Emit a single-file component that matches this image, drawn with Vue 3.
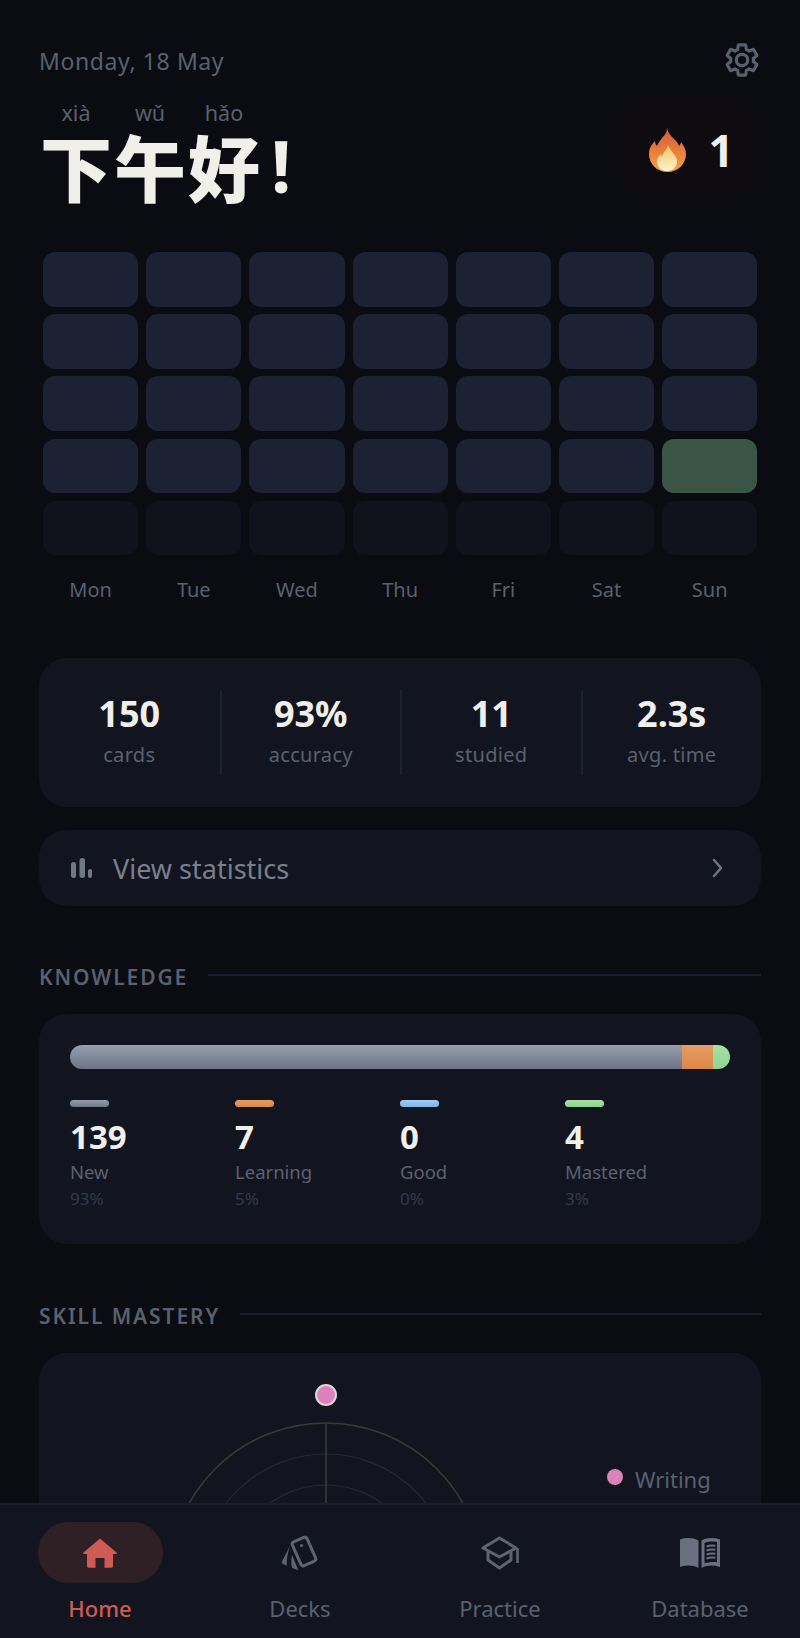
<template>
  <div class="page">
    <div class="top-row">
      <div class="date">Monday, 18 May</div>
      <svg class="gear" viewBox="0 0 24 24" width="38" height="38" fill="none" stroke="#5b606f" stroke-width="2">
        <path d="M19.14 12.94c.04-.3.06-.61.06-.94 0-.32-.02-.64-.07-.94l2.03-1.58c.18-.14.23-.41.12-.61l-1.92-3.32c-.12-.22-.37-.29-.59-.22l-2.39.96c-.5-.38-1.03-.7-1.62-.94l-.36-2.54c-.04-.24-.24-.41-.48-.41h-3.84c-.24 0-.43.17-.47.41l-.36 2.54c-.59.24-1.13.57-1.62.94l-2.39-.96c-.22-.08-.47 0-.59.22L2.74 8.87c-.12.21-.08.47.12.61l2.03 1.58c-.05.3-.09.63-.09.94s.02.64.07.94l-2.03 1.58c-.18.14-.23.41-.12.61l1.92 3.32c.12.22.37.29.59.22l2.39-.96c.5.38 1.03.7 1.62.94l.36 2.54c.05.24.24.41.48.41h3.84c.24 0 .44-.17.47-.41l.36-2.54c.59-.24 1.13-.56 1.62-.94l2.39.96c.22.08.47 0 .59-.22l1.92-3.32c.12-.22.07-.47-.12-.61l-2.01-1.58z"/>
        <circle cx="12" cy="12" r="3.6"/>
      </svg>
    </div>

    <div class="greeting-row">
      <div class="greeting">
        <div v-for="c in greeting" :key="c.han" class="ruby">
          <span class="py">{{ c.py }}</span>
          <span class="han">{{ c.han }}</span>
        </div>
        <span class="han bang">!</span>
      </div>
      <div class="streak">
        <svg width="37" height="44" viewBox="0 0 37 44">
          <defs>
            <linearGradient id="flame" x1="0" y1="0" x2="0" y2="1">
              <stop offset="0" stop-color="#d4593a"/>
              <stop offset="0.55" stop-color="#ea803a"/>
              <stop offset="1" stop-color="#f3a24a"/>
            </linearGradient>
            <linearGradient id="flame-in" x1="0" y1="0" x2="0" y2="1">
              <stop offset="0" stop-color="#f6c060"/>
              <stop offset="1" stop-color="#fff6d0"/>
            </linearGradient>
          </defs>
          <path fill="url(#flame)" d="M18 0c1 5 4 8 8 12 2 2 3 3 4 6 1-1 2-3 2-4 3 4 5 8 5 12 0 10-8 18-18.500 18S0 36 0 26c0-6 3-10 6-13 0 2 1 4 2 5 1-3 3-5 5-8 3-3 5-6 5-10z"/>
          <path fill="url(#flame-in)" d="M19 17c1 3 3 5 5 8 2 2 4 5 4 8 0 6-4 10-10 10s-10-4-10-10c0-3 2-5 4-7 0 1 .5 2 1 3 1-5 5-7 6-12z"/>
        </svg>
        <span class="streak-num">1</span>
      </div>
    </div>

    <div class="heat">
      <div v-for="(c, i) in cells" :key="i" class="cell" :class="c"></div>
    </div>
    <div class="days">
      <span v-for="d in days" :key="d">{{ d }}</span>
    </div>

    <div class="card stats">
      <div v-for="s in stats" :key="s.label" class="stat">
        <div class="stat-num">{{ s.value }}</div>
        <div class="stat-label">{{ s.label }}</div>
      </div>
    </div>

    <div class="card stats-link">
      <svg width="22" height="21" viewBox="0 0 22 21" fill="#727786">
        <rect x="1" y="4" width="5" height="16" rx="2.500"/>
        <rect x="9.500" y="0" width="5.500" height="20" rx="2.700"/>
        <rect x="18" y="11" width="4" height="9" rx="2"/>
      </svg>
      <span class="link-text">View statistics</span>
      <svg class="chevron" width="12" height="22" viewBox="0 0 12 22" fill="none" stroke="#727786" stroke-width="2.400" stroke-linecap="round" stroke-linejoin="round">
        <path d="M2 3l7 8-7 8"/>
      </svg>
    </div>

    <div class="section-head first">
      <span>KNOWLEDGE</span>
      <i></i>
    </div>
    <div class="card knowledge">
      <div class="bar">
        <div class="seg seg-new" :style="{ width: '612px' }"></div>
        <div class="seg seg-learning" :style="{ width: '31px' }"></div>
        <div class="seg seg-mastered"></div>
      </div>
      <div class="legend">
        <div v-for="k in knowledge" :key="k.label" class="legend-item">
          <div class="dash" :class="k.cls"></div>
          <div class="k-num">{{ k.value }}</div>
          <div class="k-label">{{ k.label }}</div>
          <div class="k-pct">{{ k.pct }}</div>
        </div>
      </div>
    </div>

    <div class="section-head second">
      <span>SKILL MASTERY</span>
      <i></i>
    </div>
    <div class="card skill">
      <svg class="radar" width="722" height="230" viewBox="0 0 722 230" fill="none">
        <circle cx="287" cy="227" r="157" stroke="#363c33" stroke-width="1.500"/>
        <circle cx="287" cy="227" r="126" stroke="#242934" stroke-width="1.200"/>
        <circle cx="287" cy="227" r="95" stroke="#242934" stroke-width="1.200"/>
        <path d="M287 70v160" stroke="#363c33" stroke-width="1.500"/>
        <circle cx="287" cy="42" r="10" fill="#dc82b8" stroke="#dcd6da" stroke-width="2"/>
      </svg>
      <div class="skill-legend">
        <i></i>
        <span>Writing</span>
      </div>
    </div>

    <nav class="nav">
      <div class="nav-item active">
        <div class="nav-icon">
          <svg width="34" height="30" viewBox="0 0 34 30" fill="#cf5b55">
            <path d="M17 0.500 33.500 14.500c.5.500.2 1.500-.6 1.500H30v12c0 1-.7 1.700-1.700 1.700H21.500V20h-9v9.700H5.700C4.700 29.700 4 29 4 28V16H1.100C.3 16 0 15 .5 14.500z"/>
          </svg>
        </div>
        <span>Home</span>
      </div>
      <div class="nav-item">
        <div class="nav-icon">
          <svg width="38" height="36" viewBox="0 0 38 36" fill="none">
            <rect x="15" y="3.500" width="16" height="26" rx="2.500" transform="rotate(-24 23 16.500)" stroke="#5e6371" stroke-width="3"/>
            <circle cx="20.500" cy="10.500" r="1.600" fill="#5e6371"/>
            <path d="M9 11 1.200 26c-.5 1.500 0 2.600 1.200 3.200l3.400 1.300c-.5-6 1-13 3.200-19.500z" fill="#5e6371"/>
            <path d="M11 20c-1 5-1 10 .4 13l6 2.300z" fill="#5e6371"/>
          </svg>
        </div>
        <span>Decks</span>
      </div>
      <div class="nav-item">
        <div class="nav-icon">
          <svg width="40" height="34" viewBox="0 0 40 34" fill="none" stroke="#5e6371" stroke-width="3" stroke-linejoin="round">
            <path d="M19.500 2 36 12 19.500 21 3 12z"/>
            <path d="M8 15.500V24l11.500 8L31 24v-8.500"/>
            <path d="M37.500 12v15" stroke-width="2.600"/>
          </svg>
        </div>
        <span>Practice</span>
      </div>
      <div class="nav-item">
        <div class="nav-icon">
          <svg width="40" height="32" viewBox="0 0 40 32">
            <path fill="#6b7080" d="M0 2.500c6-2 12-2 18.500 1V31c-6-3-12-3-18.500-1z"/>
            <path fill="#6b7080" d="M21.500 3.500c6-3 12-3 18.500-1V30c-6.500-2-12.500-2-18.500 1zM24.500 6v20.500c4.500-1.600 8.500-1.900 12.500-1.200V5c-4-.8-8.500-.6-12.500 1z"/>
            <path fill="none" stroke="#6b7080" stroke-width="1.900" d="M26.500 9.500c3-1 6-1.200 9-.7M26.500 13.500c3-1 6-1.200 9-.7M26.500 17.500c3-1 6-1.200 9-.7M26.500 21.500c3-1 6-1.200 9-.7"/>
          </svg>
        </div>
        <span>Database</span>
      </div>
    </nav>
  </div>
</template>

<script setup>
const greeting = [
  { han: '下', py: 'xià' },
  { han: '午', py: 'wǔ' },
  { han: '好', py: 'hǎo' }
]

const days = ['Mon', 'Tue', 'Wed', 'Thu', 'Fri', 'Sat', 'Sun']

const cells = Array.from({ length: 35 }, (_, i) => {
  if (i === 27) return 'done'
  if (i >= 28) return 'future'
  return 'past'
})

const stats = [
  { value: '150', label: 'cards' },
  { value: '93%', label: 'accuracy' },
  { value: '11', label: 'studied' },
  { value: '2.3s', label: 'avg. time' }
]

const knowledge = [
  { value: 139, label: 'New', pct: '93%', cls: 'seg-new' },
  { value: 7, label: 'Learning', pct: '5%', cls: 'seg-learning' },
  { value: 0, label: 'Good', pct: '0%', cls: 'seg-good' },
  { value: 4, label: 'Mastered', pct: '3%', cls: 'seg-mastered' }
]
</script>

<style>
html, body {
  margin: 0;
  background: #0a0c11;
}
</style>

<style scoped>
.page {
  position: relative;
  height: 1638px;
  overflow: hidden;
  box-sizing: border-box;
  padding: 43px 39px 0;
  background: #0a0c11;
  font-family: "Noto Sans", "Noto Sans CJK SC", sans-serif;
  color: #f0efe9;
}

.top-row {
  display: flex;
  justify-content: space-between;
  align-items: center;
  height: 34px;
}

.date {
  font-size: 23px;
  line-height: 34px;
  margin-top: 2px;
  color: #5b606f;
  letter-spacing: 0.6px;
}

.greeting-row {
  display: flex;
  justify-content: space-between;
  margin-top: 23px;
  height: 97px;
}

.greeting {
  display: flex;
  align-items: flex-start;
  height: 108px;
}

.ruby {
  display: flex;
  flex-direction: column;
  align-items: center;
  width: 74px;
}

.py {
  font-size: 21.5px;
  line-height: 26px;
  color: #5b606f;
}

.han {
  margin-top: -2px;
  font-size: 72px;
  line-height: 82px;
  font-weight: 900;
  font-family: "Noto Sans CJK SC", "Noto Sans", sans-serif;
}

.bang {
  margin: 24px 0 0 10px;
  font-family: "Noto Sans", sans-serif;
  font-weight: 700;
}

.streak {
  display: flex;
  align-items: center;
  justify-content: center;
  gap: 22px;
  box-sizing: border-box;
  width: 145px;
  height: 97px;
  padding: 2px 0 0 6px;
  border-radius: 28px;
  background: #0e0b11;
}

.streak-num {
  font-size: 44px;
  font-weight: 700;
  line-height: 50px;
}

.heat {
  display: grid;
  grid-template-columns: repeat(7, 95.2px);
  grid-auto-rows: 54.5px;
  gap: 7.7px 8px;
  margin: 55px 0 0 4px;
}

.cell {
  border-radius: 12px;
}

.past {
  background: #1c2233;
}

.future {
  background: #10131c;
}

.done {
  background: #3a5546;
}

.days {
  display: grid;
  grid-template-columns: repeat(7, 95.2px);
  column-gap: 8px;
  margin: 22px 0 0 4px;
  font-size: 20px;
  line-height: 26px;
  text-align: center;
  color: #5b606f;
}

.card {
  width: 722px;
  box-sizing: border-box;
  border-radius: 28px;
  background: #121520;
}

.stats {
  display: grid;
  grid-template-columns: repeat(4, 1fr);
  height: 149px;
  margin-top: 55px;
  padding: 32px 0 0;
}

.stat {
  height: 85px;
  text-align: center;
  border-left: 2px solid #1c2130;
}

.stat:first-child {
  border-left: 0;
}

.stat-num {
  font-size: 36px;
  line-height: 48px;
  font-weight: 700;
}

.stat-label {
  margin-top: 4px;
  font-size: 20px;
  line-height: 26px;
  letter-spacing: 0.3px;
  color: #5b606f;
}

.stats-link {
  display: flex;
  align-items: center;
  height: 76px;
  margin-top: 23px;
  padding: 0 37px 0 31px;
}

.link-text {
  margin-left: 21px;
  font-size: 27px;
  color: #7a7f8e;
}

.chevron {
  margin-left: auto;
}

.section-head {
  display: flex;
  align-items: center;
  gap: 20px;
  width: 722px;
  height: 30px;
  font-size: 21px;
  font-weight: 600;
  letter-spacing: 1.9px;
  color: #5b606f;
}

.section-head i {
  flex: 1;
  height: 2px;
  margin-top: -4px;
  background: #1a1d2a;
}

.first {
  margin-top: 56px;
}

.second {
  margin-top: 57px;
}

.knowledge {
  height: 230px;
  margin-top: 22px;
  padding: 31px 31px 0;
}

.bar {
  display: flex;
  height: 24px;
  border-radius: 12px;
  overflow: hidden;
}

.seg-new {
  background: linear-gradient(180deg, #979eac, #6d7485);
}

.seg-learning {
  background: linear-gradient(180deg, #e59c62, #dd8849);
}

.seg-good {
  background: linear-gradient(180deg, #a0cdf2, #7fb4e4);
}

.seg-mastered {
  background: linear-gradient(180deg, #a6e0a2, #8fd493);
}

.seg-mastered:not(.dash) {
  flex: 1;
}

.legend {
  display: grid;
  grid-template-columns: repeat(4, 165px);
  margin-top: 31px;
}

.dash {
  width: 39px;
  height: 6.500px;
  border-radius: 4px;
}

.k-num {
  margin-top: 8px;
  font-size: 33px;
  line-height: 44px;
  font-weight: 700;
}

.k-label {
  margin-top: 0;
  font-size: 18.500px;
  line-height: 26px;
  color: #5b606f;
}

.k-pct {
  margin-top: 2px;
  font-size: 17px;
  line-height: 24px;
  color: #33384a;
}

.skill {
  position: relative;
  height: 300px;
  margin-top: 22px;
}

.radar {
  position: absolute;
  left: 0;
  top: 0;
}

.skill-legend {
  position: absolute;
  left: 568px;
  top: 111px;
  display: flex;
  align-items: center;
  gap: 12px;
  font-size: 22px;
  line-height: 30px;
  color: #5b606f;
}

.skill-legend i {
  width: 16px;
  height: 16px;
  margin-top: -4px;
  border-radius: 50%;
  background: #dc82b8;
}

.nav {
  position: absolute;
  left: 0;
  right: 0;
  bottom: 0;
  display: grid;
  grid-template-columns: repeat(4, 200px);
  height: 135px;
  box-sizing: border-box;
  border-top: 2px solid #1a1e2b;
  background: #121520;
}

.nav-item {
  display: flex;
  flex-direction: column;
  align-items: center;
  padding-top: 17px;
  font-size: 22px;
  line-height: 30px;
  color: #5b606f;
}

.nav-icon {
  display: flex;
  align-items: center;
  justify-content: center;
  width: 125px;
  height: 61px;
  margin-bottom: 10px;
  border-radius: 31px;
}

.active {
  font-weight: 500;
  color: #cf5b55;
}

.active .nav-icon {
  background: #2f2026;
}
</style>
